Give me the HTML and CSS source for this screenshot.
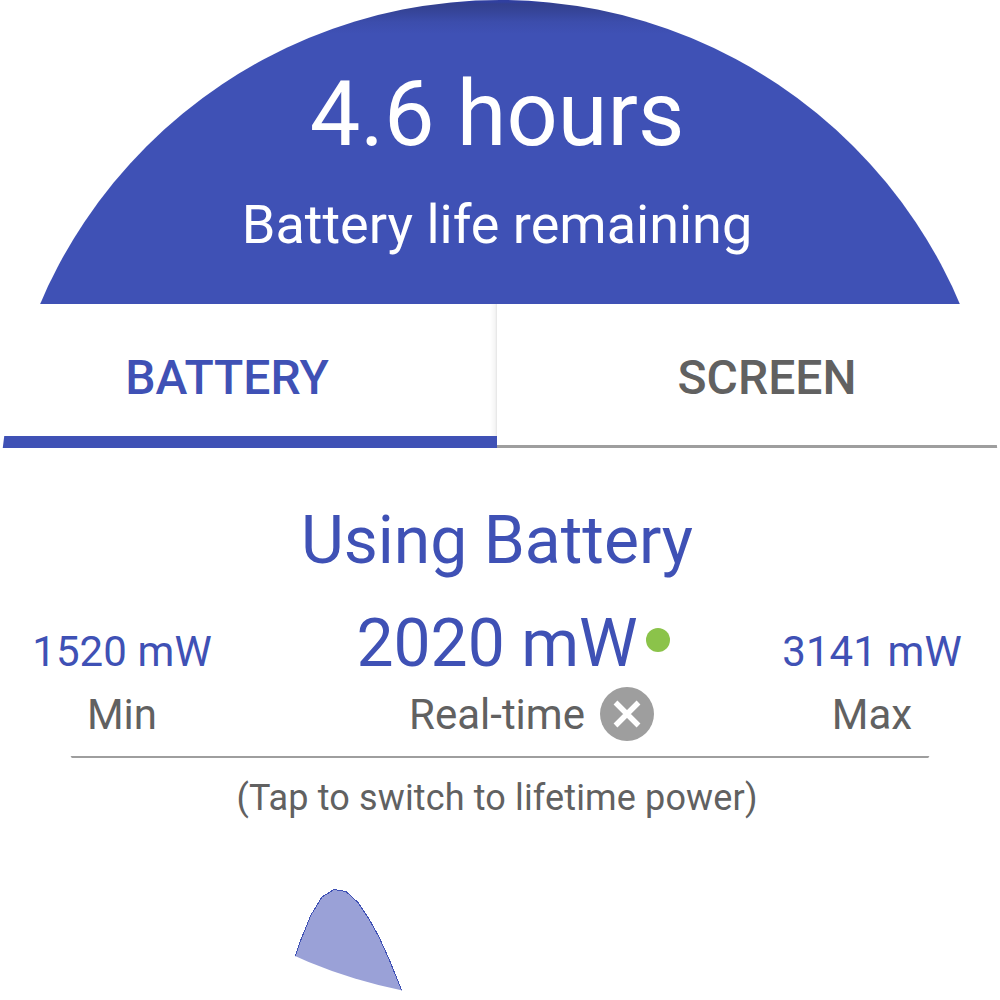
FILE: index.html
```html
<!DOCTYPE html>
<html lang="en">
<head>
<meta charset="utf-8">
<title>Battery</title>
<link rel="stylesheet" href="styles.css">
</head>
<body>
<div class="lens">
  <main class="app">
    <header class="hero">
      <h1 class="hero-value">4.6 hours</h1>
      <p class="hero-label">Battery life remaining</p>
    </header>
    <nav class="tabs">
      <div class="tab tab-active">BATTERY</div>
      <div class="tab">SCREEN</div>
    </nav>
    <section class="power">
      <h2 class="power-title">Using Battery</h2>
      <div class="stats">
        <span class="value">1520 mW</span>
        <span class="value value-main"><span class="anchor">2020 mW<i class="dot"></i></span></span>
        <span class="value">3141 mW</span>
      </div>
      <div class="stats stats-labels">
        <span>Min</span>
        <span><span class="anchor">Real-time<svg class="close" viewBox="0 0 54 54"><circle cx="27" cy="27" r="27" fill="#9e9e9e"/><path d="M15.5 15.5 38.5 38.5M38.5 15.5 15.5 38.5" stroke="#fff" stroke-width="5.4"/></svg></span></span>
        <span>Max</span>
      </div>
      <p class="hint">(Tap to switch to lifetime power)</p>
    </section>
    <svg class="chart" viewBox="0 0 1080 180">
      <path class="area" d="M334 150 343 122 354 95 365 77 377 69.5 389 71.5 401 82.5 412 99 422 117 432 139 444.5 170 449 180H326Z"/>
      <path class="line" d="M330 163 338.5 136 343 122 354 95 365 77 377 69.5 389 71.5 401 82.5 412 99 422 117 432 139 444.5 170 449 180"/>
    </svg>
  </main>
</div>
</body>
</html>
```
FILE: styles.css
```css
* {
  box-sizing: border-box;
}

body {
  margin: 0;
  background: #fff;
  color: #616161;
  font-family: Roboto, "Liberation Sans", sans-serif;
}

h1, h2, p {
  margin: 0;
  font-weight: 400;
}

/* circular window onto a wider phone screen */
.lens {
  display: flex;
  justify-content: center;
  width: 1000px;
  height: 1000px;
  padding-right: 6px;
  overflow: hidden;
  clip-path: circle(500px at 500px 500px);
}

.app {
  flex: 0 0 1080px;
  min-width: 0;
  width: 1080px;
  display: flex;
  flex-direction: column;
  text-align: center;
}

.hero {
  height: 304px;
  padding-top: 65px;
  color: #fff;
  background: linear-gradient(#303f9f 0 2px, #33408e 4px, #36459a 12px, #3c4dac 22px, #3f51b5 34px);
}

.hero-value {
  font-size: 90px;
  line-height: 100px;
}

.hero-label {
  margin-top: 30px;
  font-size: 54px;
  line-height: 60px;
}

.tabs {
  display: grid;
  grid-template-columns: 1fr 1fr;
  height: 144px;
}

.tab {
  padding-top: 44px;
  border-bottom: 3px solid #9e9e9e;
  font-size: 48px;
  font-weight: 500;
  line-height: 60px;
}

.tab-active {
  border-bottom: 12px solid #3f51b5;
  color: #3f51b5;
  background: linear-gradient(to left, #e4e4e4, #f5f5f5 2px, #fff 7px);
}

.power {
  padding-top: 53px;
}

.power-title {
  color: #3f51b5;
  font-size: 66px;
  line-height: 80px;
}

.stats {
  display: grid;
  grid-template-columns: repeat(3, 375px);
  justify-content: center;
  align-items: baseline;
  margin-top: 23px;
}

.value {
  color: #3f51b5;
  font-size: 42px;
  letter-spacing: 0.1px;
}

.value-main {
  font-size: 66px;
  line-height: 80px;
  letter-spacing: 0;
}

.anchor {
  position: relative;
}

.dot {
  position: absolute;
  top: 23px;
  left: calc(100% + 8px);
  width: 24px;
  height: 24px;
  border-radius: 50%;
  background: #8bc34a;
}

.stats-labels {
  height: 71px;
  margin-top: 3px;
  border-bottom: 2px solid #9e9e9e;
  font-size: 42px;
  line-height: 56px;
}

.close {
  position: absolute;
  top: -3px;
  left: calc(100% + 15px);
  width: 54px;
  height: 54px;
}

.hint {
  margin-top: 18px;
  font-size: 36px;
  line-height: 44px;
  letter-spacing: 0.14px;
}

.chart {
  width: 1080px;
  height: 180px;
}

.area {
  fill: #9aa1d7;
}

.line {
  fill: none;
  stroke: #3f51b5;
  stroke-width: 1;
  shape-rendering: crispEdges;
}
```
